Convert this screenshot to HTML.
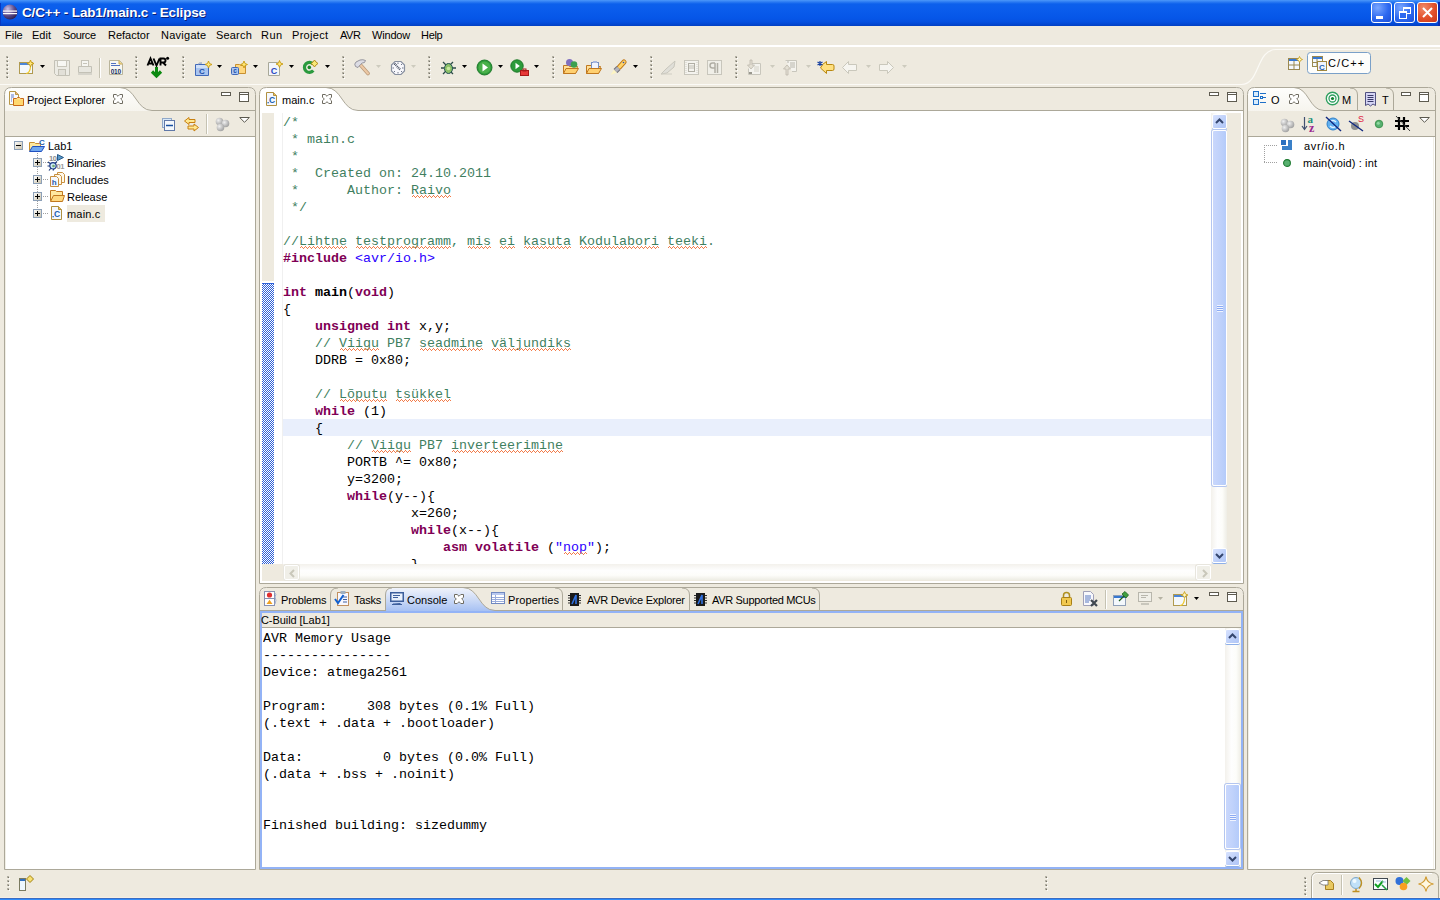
<!DOCTYPE html>
<html><head><meta charset="utf-8">
<style>
*{box-sizing:border-box;margin:0;padding:0}
html,body{width:1440px;height:900px;overflow:hidden;background:#eeeadf;font-family:"Liberation Sans",sans-serif;font-size:11px;color:#000}
.a{position:absolute}
.nw{white-space:nowrap}
#title{left:0;top:0;width:1440px;height:26px;background:linear-gradient(#4c98fa 0px,#2a7af2 2px,#0c60ec 4px,#0a5cec 10px,#0656e8 18px,#0550e0 22px,#0344cc 25px,#0340c0 26px)}
#title .t{left:22px;top:5px;color:#fff;font-weight:bold;font-size:13.5px;letter-spacing:-0.15px;text-shadow:1px 1px 0 #0a1f7a}
.wb{top:2px;width:21px;height:21px;border:1px solid #fff;border-radius:3px;background:radial-gradient(circle at 30% 25%,#7aa7ff,#2d69f0 55%,#1c4fd8)}
.menu span{position:absolute;top:30px}
.wl{left:0;top:45px;width:1440px;height:2px;background:#fff}
.code{font-family:"Liberation Mono",monospace;font-size:13.33px;line-height:17px;white-space:pre}
.cm{color:#3f7f5f}
.kw{color:#7f0055;font-weight:bold}
.bd{font-weight:bold}
.str{color:#2a00ff}
.sp{}
.grip{width:2px;border-left:2px dotted #9c9a8e}
</style></head><body>
<div id="title" class="a">
 <svg class="a" style="left:2px;top:4px" width="16" height="16" viewBox="0 0 16 16"><defs><radialGradient id="eg" cx="35%" cy="30%" r="75%"><stop offset="0" stop-color="#c9c0e8"/><stop offset=".6" stop-color="#5a4a8a"/><stop offset="1" stop-color="#2a2050"/></radialGradient></defs><circle cx="8" cy="8" r="7.5" fill="url(#eg)"/><rect x="1" y="6.5" width="14" height="1.2" fill="#fff"/><rect x="1" y="9" width="14" height="1.2" fill="#fff"/></svg>
 <div class="a t nw">C/C++ - Lab1/main.c - Eclipse</div>
 <div class="a" style="left:0;top:3px;width:1px;height:23px;background:#0838c0"></div><div class="a" style="left:1438px;top:2px;width:2px;height:24px;background:#0a2eb0"></div>
 <div class="a wb" style="left:1371px"><div class="a" style="left:4px;top:13px;width:7px;height:3px;background:#fff"></div></div>
 <div class="a wb" style="left:1394px"><div class="a" style="left:8px;top:4px;width:8px;height:7px;border:1px solid #fff;border-top-width:2px"></div><div class="a" style="left:4px;top:8px;width:8px;height:8px;border:1px solid #fff;border-top-width:2px;background:#2d69f0"></div></div>
 <div class="a wb" style="left:1417px;background:radial-gradient(circle at 30% 25%,#f08a68,#e2502a 55%,#c8381a)"><svg class="a" style="left:4px;top:4px" width="11" height="11"><path d="M1 1L10 10M10 1L1 10" stroke="#fff" stroke-width="2"/></svg></div>
</div>

<div class="a wl"></div>

<!-- FRAMES -->
<svg class="a" style="left:0;top:0" width="1440" height="900">
 <defs>
  <linearGradient id="tabg" x1="0" y1="0" x2="0" y2="1"><stop offset="0" stop-color="#fefefc"/><stop offset="1" stop-color="#eeeadf"/></linearGradient>
  <linearGradient id="tabb" x1="0" y1="0" x2="0" y2="1"><stop offset="0" stop-color="#f0f3fb"/><stop offset=".5" stop-color="#cddbf6"/><stop offset="1" stop-color="#a7c1f3"/></linearGradient>
 </defs>
 <!-- Project explorer -->
 <path d="M4.5 869.5 V94.5 Q4.5 87.5 11.5 87.5 H248.5 Q255.5 87.5 255.5 94.5 V869.5 H4.5Z" fill="#fff"/>
 <path d="M5 136 V95 Q5 88 12 88 H120 C136 88 136 110 152 110 H255 V136Z" fill="url(#tabg)"/>
 <path d="M152 111 H255 V136 H5 V111Z" fill="#eeeadf"/>
 <path d="M120 88 H248 Q255 88 255 95 V110 H152 C136 110 136 88 120 88Z" fill="#eeeadf"/>
 <path d="M120 87.5 C136 87.5 136 110.5 152 110.5 H255" fill="none" stroke="#aca899"/>
 <line x1="5" y1="136.5" x2="255" y2="136.5" stroke="#aca899"/>
 <path d="M5.5 137 V869" stroke="#f1efe6"/>
 <path d="M4.5 869.5 V94.5 Q4.5 87.5 11.5 87.5 H248.5 Q255.5 87.5 255.5 94.5 V869.5 H4.5Z" fill="none" stroke="#aca899"/>
 <!-- Editor -->
 <path d="M259.5 583.5 V94.5 Q259.5 87.5 266.5 87.5 H1236.5 Q1243.5 87.5 1243.5 94.5 V583.5 H259.5Z" fill="#fff"/>
 <path d="M326 88 H1236 Q1243 88 1243 95 V110 H358 C342 110 342 88 326 88Z" fill="#eeeadf"/>
 <path d="M326 87.5 C342 87.5 342 110.5 358 110.5 H1243" fill="none" stroke="#aca899"/>
 <path d="M259.5 583.5 V94.5 Q259.5 87.5 266.5 87.5 H1236.5 Q1243.5 87.5 1243.5 94.5 V583.5 H259.5Z" fill="none" stroke="#aca899"/>
 <!-- Outline -->
 <path d="M1247.5 869.5 V94.5 Q1247.5 87.5 1254.5 87.5 H1428.5 Q1435.5 87.5 1435.5 94.5 V869.5 H1247.5Z" fill="#fff"/>
 <path d="M1248 136 V95 Q1248 88 1255 88 H1294 C1309 88 1309 110 1324 110 H1435 V136Z" fill="url(#tabg)"/>
 <path d="M1324 111 H1435 V136 H1248 V111Z" fill="#eeeadf"/>
 <path d="M1294 88 H1428 Q1435 88 1435 95 V110 H1324 C1309 110 1309 88 1294 88Z" fill="#eeeadf"/>
 <path d="M1294 87.5 C1309 87.5 1309 110.5 1324 110.5 H1435" fill="none" stroke="#aca899"/>
 <path d="M1357.5 110 V95 Q1357.5 88 1350 88" fill="none" stroke="#aca899"/>
 <path d="M1393.5 110 V95 Q1393.5 88 1386 88" fill="none" stroke="#aca899"/>
 <line x1="1248" y1="136.5" x2="1435" y2="136.5" stroke="#aca899"/>
 <path d="M1248.5 137 V869 M1433.5 137 V869" stroke="#f1efe6"/>
 <path d="M1247.5 869.5 V94.5 Q1247.5 87.5 1254.5 87.5 H1428.5 Q1435.5 87.5 1435.5 94.5 V869.5 H1247.5Z" fill="none" stroke="#aca899"/>
 <!-- Console -->
 <path d="M259.5 869.5 V594.5 Q259.5 587.5 266.5 587.5 H1236.5 Q1243.5 587.5 1243.5 594.5 V869.5 H259.5Z" fill="#fff"/>
 <path d="M260 611 V595 Q260 588 267 588 H1236 Q1243 588 1243 595 V611Z" fill="#eeeadf"/>
 <path d="M385 611 V595 Q385 588 392 588 H463 C479 588 479 610 495 610 V611Z" fill="url(#tabb)"/>
 <path d="M463 587.5 C479 587.5 479 610.5 495 610.5" fill="none" stroke="#aca899"/>
 <path d="M330.5 610 V595 Q330.5 588 338 588" fill="none" stroke="#aca899"/>
 <path d="M385.5 611 V595 Q385.5 588 392 588" fill="none" stroke="#aca899"/>
 <path d="M562.5 610 V595 Q562.5 588 555 588" fill="none" stroke="#aca899"/>
 <path d="M689.5 610 V595 Q689.5 588 682 588" fill="none" stroke="#aca899"/>
 <path d="M819.5 610 V595 Q819.5 588 812 588" fill="none" stroke="#aca899"/>
 <line x1="260" y1="610.5" x2="385" y2="610.5" stroke="#aca899"/>
 <line x1="495" y1="610.5" x2="1243" y2="610.5" stroke="#aca899"/>
 <rect x="262" y="613" width="979" height="14" fill="#eeeadf"/>
 <line x1="262" y1="627.5" x2="1241" y2="627.5" stroke="#aca899"/>
 <path d="M259.5 869.5 V594.5 Q259.5 587.5 266.5 587.5 H1236.5 Q1243.5 587.5 1243.5 594.5 V869.5 H259.5Z" fill="none" stroke="#aca899"/>
 <path d="M261 612 H1242 V868 H261Z" fill="none" stroke="#93b3f6" stroke-width="2"/>
</svg>

<div class="a" style="left:67px;top:205px;width:38px;height:17px;background:#eeeadf"></div>
<!-- EDITOR -->
<div class="a" style="left:262px;top:113px;width:12px;height:168px;background:#eeeadf"></div>
<div class="a" style="left:262px;top:283px;width:12px;height:281px;background-color:#fff;background-image:repeating-conic-gradient(#2c5fd8 0% 25%,#fff 0% 50%);background-size:2px 2px;border-top:1px solid #2c5fd8"></div>
<div class="a" style="left:282px;top:113px;width:1px;height:451px;background:#f0f0f0"></div>
<div class="a" style="left:283px;top:419px;width:929px;height:17px;background:#e9effc"></div>
<div class="a" style="left:262px;top:564px;width:979px;height:17px;background:#eeeadf"></div>
<div class="a" style="left:1212px;top:113px;width:29px;height:451px;background:#eeeadf"></div>
<div class="a" style="left:262px;top:113px;width:950px;height:451px;overflow:hidden"><div class="a code" style="left:21px;top:1px"><span class="cm">/*
 * main.c
 *
 *  Created on: 24.10.2011
 *      Author: <span class="sp">Raivo</span>
 */</span>

<span class="cm">//<span class="sp">Lihtne</span> <span class="sp">testprogramm</span>, <span class="sp">mis</span> <span class="sp">ei</span> <span class="sp">kasuta</span> <span class="sp">Kodulabori</span> <span class="sp">teeki</span>.</span>
<span class="kw">#include</span> <span class="str">&lt;avr/io.h&gt;</span>

<span class="kw">int</span> <span class="bd">main</span>(<span class="kw">void</span>)
{
    <span class="kw">unsigned</span> <span class="kw">int</span> x,y;
    <span class="cm">// <span class="sp">Viigu</span> PB7 <span class="sp">seadmine</span> <span class="sp">väljundiks</span></span>
    DDRB = 0x80;

    <span class="cm">// <span class="sp">Lõputu</span> <span class="sp">tsükkel</span></span>
    <span class="kw">while</span> (1)
    {
        <span class="cm">// <span class="sp">Viigu</span> PB7 <span class="sp">inverteerimine</span></span>
        PORTB ^= 0x80;
        y=3200;
        <span class="kw">while</span>(y--){
                x=260;
                <span class="kw">while</span>(x--){
                    <span class="kw">asm</span> <span class="kw">volatile</span> (<span class="str">"<span class="sp">nop</span>"</span>);
                }
</div></div>

<!-- SQUIG --><svg class="a" style="left:0;top:0" width="1440" height="900"><path d="M411.5 197.5 L413.5 195.5 L415.5 197.5 L417.5 195.5 L419.5 197.5 L421.5 195.5 L423.5 197.5 L425.5 195.5 L427.5 197.5 L429.5 195.5 L431.5 197.5 L433.5 195.5 L435.5 197.5 L437.5 195.5 L439.5 197.5 L441.5 195.5 L443.5 197.5 L445.5 195.5 L447.5 197.5 L449.5 195.5 L451.5 197.5 M299.5 248.5 L301.5 246.5 L303.5 248.5 L305.5 246.5 L307.5 248.5 L309.5 246.5 L311.5 248.5 L313.5 246.5 L315.5 248.5 L317.5 246.5 L319.5 248.5 L321.5 246.5 L323.5 248.5 L325.5 246.5 L327.5 248.5 L329.5 246.5 L331.5 248.5 L333.5 246.5 L335.5 248.5 L337.5 246.5 L339.5 248.5 L341.5 246.5 L343.5 248.5 L345.5 246.5 L347.5 248.5 M355.5 248.5 L357.5 246.5 L359.5 248.5 L361.5 246.5 L363.5 248.5 L365.5 246.5 L367.5 248.5 L369.5 246.5 L371.5 248.5 L373.5 246.5 L375.5 248.5 L377.5 246.5 L379.5 248.5 L381.5 246.5 L383.5 248.5 L385.5 246.5 L387.5 248.5 L389.5 246.5 L391.5 248.5 L393.5 246.5 L395.5 248.5 L397.5 246.5 L399.5 248.5 L401.5 246.5 L403.5 248.5 L405.5 246.5 L407.5 248.5 L409.5 246.5 L411.5 248.5 L413.5 246.5 L415.5 248.5 L417.5 246.5 L419.5 248.5 L421.5 246.5 L423.5 248.5 L425.5 246.5 L427.5 248.5 L429.5 246.5 L431.5 248.5 L433.5 246.5 L435.5 248.5 L437.5 246.5 L439.5 248.5 L441.5 246.5 L443.5 248.5 L445.5 246.5 L447.5 248.5 L449.5 246.5 L451.5 248.5 M467.5 248.5 L469.5 246.5 L471.5 248.5 L473.5 246.5 L475.5 248.5 L477.5 246.5 L479.5 248.5 L481.5 246.5 L483.5 248.5 L485.5 246.5 L487.5 248.5 L489.5 246.5 L491.5 248.5 M499.5 248.5 L501.5 246.5 L503.5 248.5 L505.5 246.5 L507.5 248.5 L509.5 246.5 L511.5 248.5 L513.5 246.5 L515.5 248.5 M523.5 248.5 L525.5 246.5 L527.5 248.5 L529.5 246.5 L531.5 248.5 L533.5 246.5 L535.5 248.5 L537.5 246.5 L539.5 248.5 L541.5 246.5 L543.5 248.5 L545.5 246.5 L547.5 248.5 L549.5 246.5 L551.5 248.5 L553.5 246.5 L555.5 248.5 L557.5 246.5 L559.5 248.5 L561.5 246.5 L563.5 248.5 L565.5 246.5 L567.5 248.5 L569.5 246.5 L571.5 248.5 M579.5 248.5 L581.5 246.5 L583.5 248.5 L585.5 246.5 L587.5 248.5 L589.5 246.5 L591.5 248.5 L593.5 246.5 L595.5 248.5 L597.5 246.5 L599.5 248.5 L601.5 246.5 L603.5 248.5 L605.5 246.5 L607.5 248.5 L609.5 246.5 L611.5 248.5 L613.5 246.5 L615.5 248.5 L617.5 246.5 L619.5 248.5 L621.5 246.5 L623.5 248.5 L625.5 246.5 L627.5 248.5 L629.5 246.5 L631.5 248.5 L633.5 246.5 L635.5 248.5 L637.5 246.5 L639.5 248.5 L641.5 246.5 L643.5 248.5 L645.5 246.5 L647.5 248.5 L649.5 246.5 L651.5 248.5 L653.5 246.5 L655.5 248.5 L657.5 246.5 L659.5 248.5 M667.5 248.5 L669.5 246.5 L671.5 248.5 L673.5 246.5 L675.5 248.5 L677.5 246.5 L679.5 248.5 L681.5 246.5 L683.5 248.5 L685.5 246.5 L687.5 248.5 L689.5 246.5 L691.5 248.5 L693.5 246.5 L695.5 248.5 L697.5 246.5 L699.5 248.5 L701.5 246.5 L703.5 248.5 L705.5 246.5 L707.5 248.5 M339.5 350.5 L341.5 348.5 L343.5 350.5 L345.5 348.5 L347.5 350.5 L349.5 348.5 L351.5 350.5 L353.5 348.5 L355.5 350.5 L357.5 348.5 L359.5 350.5 L361.5 348.5 L363.5 350.5 L365.5 348.5 L367.5 350.5 L369.5 348.5 L371.5 350.5 L373.5 348.5 L375.5 350.5 L377.5 348.5 L379.5 350.5 M419.5 350.5 L421.5 348.5 L423.5 350.5 L425.5 348.5 L427.5 350.5 L429.5 348.5 L431.5 350.5 L433.5 348.5 L435.5 350.5 L437.5 348.5 L439.5 350.5 L441.5 348.5 L443.5 350.5 L445.5 348.5 L447.5 350.5 L449.5 348.5 L451.5 350.5 L453.5 348.5 L455.5 350.5 L457.5 348.5 L459.5 350.5 L461.5 348.5 L463.5 350.5 L465.5 348.5 L467.5 350.5 L469.5 348.5 L471.5 350.5 L473.5 348.5 L475.5 350.5 L477.5 348.5 L479.5 350.5 L481.5 348.5 L483.5 350.5 M491.5 350.5 L493.5 348.5 L495.5 350.5 L497.5 348.5 L499.5 350.5 L501.5 348.5 L503.5 350.5 L505.5 348.5 L507.5 350.5 L509.5 348.5 L511.5 350.5 L513.5 348.5 L515.5 350.5 L517.5 348.5 L519.5 350.5 L521.5 348.5 L523.5 350.5 L525.5 348.5 L527.5 350.5 L529.5 348.5 L531.5 350.5 L533.5 348.5 L535.5 350.5 L537.5 348.5 L539.5 350.5 L541.5 348.5 L543.5 350.5 L545.5 348.5 L547.5 350.5 L549.5 348.5 L551.5 350.5 L553.5 348.5 L555.5 350.5 L557.5 348.5 L559.5 350.5 L561.5 348.5 L563.5 350.5 L565.5 348.5 L567.5 350.5 L569.5 348.5 L571.5 350.5 M339.5 401.5 L341.5 399.5 L343.5 401.5 L345.5 399.5 L347.5 401.5 L349.5 399.5 L351.5 401.5 L353.5 399.5 L355.5 401.5 L357.5 399.5 L359.5 401.5 L361.5 399.5 L363.5 401.5 L365.5 399.5 L367.5 401.5 L369.5 399.5 L371.5 401.5 L373.5 399.5 L375.5 401.5 L377.5 399.5 L379.5 401.5 L381.5 399.5 L383.5 401.5 L385.5 399.5 L387.5 401.5 M395.5 401.5 L397.5 399.5 L399.5 401.5 L401.5 399.5 L403.5 401.5 L405.5 399.5 L407.5 401.5 L409.5 399.5 L411.5 401.5 L413.5 399.5 L415.5 401.5 L417.5 399.5 L419.5 401.5 L421.5 399.5 L423.5 401.5 L425.5 399.5 L427.5 401.5 L429.5 399.5 L431.5 401.5 L433.5 399.5 L435.5 401.5 L437.5 399.5 L439.5 401.5 L441.5 399.5 L443.5 401.5 L445.5 399.5 L447.5 401.5 L449.5 399.5 L451.5 401.5 M371.5 452.5 L373.5 450.5 L375.5 452.5 L377.5 450.5 L379.5 452.5 L381.5 450.5 L383.5 452.5 L385.5 450.5 L387.5 452.5 L389.5 450.5 L391.5 452.5 L393.5 450.5 L395.5 452.5 L397.5 450.5 L399.5 452.5 L401.5 450.5 L403.5 452.5 L405.5 450.5 L407.5 452.5 L409.5 450.5 L411.5 452.5 M451.5 452.5 L453.5 450.5 L455.5 452.5 L457.5 450.5 L459.5 452.5 L461.5 450.5 L463.5 452.5 L465.5 450.5 L467.5 452.5 L469.5 450.5 L471.5 452.5 L473.5 450.5 L475.5 452.5 L477.5 450.5 L479.5 452.5 L481.5 450.5 L483.5 452.5 L485.5 450.5 L487.5 452.5 L489.5 450.5 L491.5 452.5 L493.5 450.5 L495.5 452.5 L497.5 450.5 L499.5 452.5 L501.5 450.5 L503.5 452.5 L505.5 450.5 L507.5 452.5 L509.5 450.5 L511.5 452.5 L513.5 450.5 L515.5 452.5 L517.5 450.5 L519.5 452.5 L521.5 450.5 L523.5 452.5 L525.5 450.5 L527.5 452.5 L529.5 450.5 L531.5 452.5 L533.5 450.5 L535.5 452.5 L537.5 450.5 L539.5 452.5 L541.5 450.5 L543.5 452.5 L545.5 450.5 L547.5 452.5 L549.5 450.5 L551.5 452.5 L553.5 450.5 L555.5 452.5 L557.5 450.5 L559.5 452.5 L561.5 450.5 L563.5 452.5 M563.5 554.5 L565.5 552.5 L567.5 554.5 L569.5 552.5 L571.5 554.5 L573.5 552.5 L575.5 554.5 L577.5 552.5 L579.5 554.5 L581.5 552.5 L583.5 554.5 L585.5 552.5 L587.5 554.5" fill="none" stroke="#f27c4a" stroke-width="1" shape-rendering="crispEdges"/></svg><!-- /SQUIG -->
<!-- CONSOLE -->
<div class="a code" style="left:263px;top:630px;height:237px;overflow:hidden">AVR Memory Usage
----------------
Device: atmega2561

Program:     308 bytes (0.1% Full)
(.text + .data + .bootloader)

Data:          0 bytes (0.0% Full)
(.data + .bss + .noinit)


Finished building: sizedummy
</div>

<!-- SCROLLBARS -->
<style>
.sbtrack{background:linear-gradient(90deg,#f3f1ec,#fefefe 40%,#fdfdfa 70%,#eeede5)}
.sbbtn{border:1px solid #fff;border-radius:2px;background:linear-gradient(135deg,#d8e2fe,#bccff9 60%,#b1c6f6);box-shadow:0 1px 0 #8fb0e8}
.sbthumb{border:1px solid #fff;border-radius:2px;background:linear-gradient(90deg,#c9d7fc,#c0d2fb 50%,#b4cbfa);box-shadow:0 0 0 1px #b4c6f0}
.hbtrack{background:linear-gradient(#f3f1ec,#fefefe 40%,#fdfdfa 70%,#eeede5)}
.dis{border:1px solid #fff;border-radius:2px;background:#f0efe8;box-shadow:0 0 0 1px #e8e6de}
</style>
<div class="a sbtrack" style="left:1211px;top:113px;width:16px;height:451px"></div>
<div class="a sbbtn" style="left:1212px;top:114px;width:15px;height:15px"><svg class="a" style="left:2px;top:3px" width="9" height="6"><path d="M1 5L4.5 1.5L8 5" stroke="#34466e" stroke-width="2" fill="none"/></svg></div>
<div class="a sbthumb" style="left:1212px;top:130px;width:15px;height:356px"><div class="a" style="left:4px;top:174px;width:6px;height:7px;background:repeating-linear-gradient(#f0f4ff 0 1px,#8cabf3 1px 2px)"></div></div>
<div class="a sbbtn" style="left:1212px;top:548px;width:15px;height:15px"><svg class="a" style="left:2px;top:4px" width="9" height="6"><path d="M1 1L4.5 4.5L8 1" stroke="#34466e" stroke-width="2" fill="none"/></svg></div>
<div class="a" style="left:1227px;top:113px;width:14px;height:468px;background:#eeeadf"></div>
<div class="a hbtrack" style="left:283px;top:564px;width:928px;height:16px"></div>
<div class="a dis" style="left:284px;top:565px;width:15px;height:15px"><svg class="a" style="left:4px;top:3px" width="6" height="9"><path d="M5 1L1.5 4.5L5 8" stroke="#c9c7ba" stroke-width="2" fill="none"/></svg></div>
<div class="a dis" style="left:1196px;top:565px;width:15px;height:15px"><svg class="a" style="left:5px;top:3px" width="6" height="9"><path d="M1 1L4.5 4.5L1 8" stroke="#c9c7ba" stroke-width="2" fill="none"/></svg></div>
<div class="a" style="left:262px;top:564px;width:21px;height:17px;background:#eeeadf"></div>
<div class="a" style="left:1211px;top:564px;width:16px;height:17px;background:#eeeadf"></div>

<div class="a sbtrack" style="left:1225px;top:628px;width:16px;height:239px"></div>
<div class="a sbbtn" style="left:1225px;top:629px;width:15px;height:15px"><svg class="a" style="left:2px;top:3px" width="9" height="6"><path d="M1 5L4.5 1.5L8 5" stroke="#34466e" stroke-width="2" fill="none"/></svg></div>
<div class="a sbthumb" style="left:1225px;top:784px;width:15px;height:65px"><div class="a" style="left:4px;top:29px;width:6px;height:7px;background:repeating-linear-gradient(#f0f4ff 0 1px,#8cabf3 1px 2px)"></div></div>
<div class="a sbbtn" style="left:1225px;top:851px;width:15px;height:15px"><svg class="a" style="left:2px;top:4px" width="9" height="6"><path d="M1 1L4.5 4.5L8 1" stroke="#34466e" stroke-width="2" fill="none"/></svg></div>

<!-- STATUS BAR -->
<div class="a" style="left:0;top:897px;width:1440px;height:1px;background:#f6efe4"></div>
<div class="a" style="left:0;top:898px;width:1440px;height:1px;background:#3a6cc2"></div>
<div class="a" style="left:0;top:899px;width:1440px;height:1px;background:#2f8bfa"></div>
<!-- ICONS -->
<svg class="a" style="left:6px;top:56px" width="3" height="24" viewBox="0 0 3 24"><rect x="0" y="0" width="2" height="2" fill="#b4b1a4"/><rect x="1" y="1" width="1" height="1" fill="#77756b"/><rect x="2" y="2" width="1" height="1" fill="#fff"/><rect x="0" y="4" width="2" height="2" fill="#b4b1a4"/><rect x="1" y="5" width="1" height="1" fill="#77756b"/><rect x="2" y="6" width="1" height="1" fill="#fff"/><rect x="0" y="8" width="2" height="2" fill="#b4b1a4"/><rect x="1" y="9" width="1" height="1" fill="#77756b"/><rect x="2" y="10" width="1" height="1" fill="#fff"/><rect x="0" y="12" width="2" height="2" fill="#b4b1a4"/><rect x="1" y="13" width="1" height="1" fill="#77756b"/><rect x="2" y="14" width="1" height="1" fill="#fff"/><rect x="0" y="16" width="2" height="2" fill="#b4b1a4"/><rect x="1" y="17" width="1" height="1" fill="#77756b"/><rect x="2" y="18" width="1" height="1" fill="#fff"/><rect x="0" y="20" width="2" height="2" fill="#b4b1a4"/><rect x="1" y="21" width="1" height="1" fill="#77756b"/><rect x="2" y="22" width="1" height="1" fill="#fff"/></svg>
<svg class="a" style="left:135px;top:56px" width="3" height="24" viewBox="0 0 3 24"><rect x="0" y="0" width="2" height="2" fill="#b4b1a4"/><rect x="1" y="1" width="1" height="1" fill="#77756b"/><rect x="2" y="2" width="1" height="1" fill="#fff"/><rect x="0" y="4" width="2" height="2" fill="#b4b1a4"/><rect x="1" y="5" width="1" height="1" fill="#77756b"/><rect x="2" y="6" width="1" height="1" fill="#fff"/><rect x="0" y="8" width="2" height="2" fill="#b4b1a4"/><rect x="1" y="9" width="1" height="1" fill="#77756b"/><rect x="2" y="10" width="1" height="1" fill="#fff"/><rect x="0" y="12" width="2" height="2" fill="#b4b1a4"/><rect x="1" y="13" width="1" height="1" fill="#77756b"/><rect x="2" y="14" width="1" height="1" fill="#fff"/><rect x="0" y="16" width="2" height="2" fill="#b4b1a4"/><rect x="1" y="17" width="1" height="1" fill="#77756b"/><rect x="2" y="18" width="1" height="1" fill="#fff"/><rect x="0" y="20" width="2" height="2" fill="#b4b1a4"/><rect x="1" y="21" width="1" height="1" fill="#77756b"/><rect x="2" y="22" width="1" height="1" fill="#fff"/></svg>
<svg class="a" style="left:182px;top:56px" width="3" height="24" viewBox="0 0 3 24"><rect x="0" y="0" width="2" height="2" fill="#b4b1a4"/><rect x="1" y="1" width="1" height="1" fill="#77756b"/><rect x="2" y="2" width="1" height="1" fill="#fff"/><rect x="0" y="4" width="2" height="2" fill="#b4b1a4"/><rect x="1" y="5" width="1" height="1" fill="#77756b"/><rect x="2" y="6" width="1" height="1" fill="#fff"/><rect x="0" y="8" width="2" height="2" fill="#b4b1a4"/><rect x="1" y="9" width="1" height="1" fill="#77756b"/><rect x="2" y="10" width="1" height="1" fill="#fff"/><rect x="0" y="12" width="2" height="2" fill="#b4b1a4"/><rect x="1" y="13" width="1" height="1" fill="#77756b"/><rect x="2" y="14" width="1" height="1" fill="#fff"/><rect x="0" y="16" width="2" height="2" fill="#b4b1a4"/><rect x="1" y="17" width="1" height="1" fill="#77756b"/><rect x="2" y="18" width="1" height="1" fill="#fff"/><rect x="0" y="20" width="2" height="2" fill="#b4b1a4"/><rect x="1" y="21" width="1" height="1" fill="#77756b"/><rect x="2" y="22" width="1" height="1" fill="#fff"/></svg>
<svg class="a" style="left:342px;top:56px" width="3" height="24" viewBox="0 0 3 24"><rect x="0" y="0" width="2" height="2" fill="#b4b1a4"/><rect x="1" y="1" width="1" height="1" fill="#77756b"/><rect x="2" y="2" width="1" height="1" fill="#fff"/><rect x="0" y="4" width="2" height="2" fill="#b4b1a4"/><rect x="1" y="5" width="1" height="1" fill="#77756b"/><rect x="2" y="6" width="1" height="1" fill="#fff"/><rect x="0" y="8" width="2" height="2" fill="#b4b1a4"/><rect x="1" y="9" width="1" height="1" fill="#77756b"/><rect x="2" y="10" width="1" height="1" fill="#fff"/><rect x="0" y="12" width="2" height="2" fill="#b4b1a4"/><rect x="1" y="13" width="1" height="1" fill="#77756b"/><rect x="2" y="14" width="1" height="1" fill="#fff"/><rect x="0" y="16" width="2" height="2" fill="#b4b1a4"/><rect x="1" y="17" width="1" height="1" fill="#77756b"/><rect x="2" y="18" width="1" height="1" fill="#fff"/><rect x="0" y="20" width="2" height="2" fill="#b4b1a4"/><rect x="1" y="21" width="1" height="1" fill="#77756b"/><rect x="2" y="22" width="1" height="1" fill="#fff"/></svg>
<svg class="a" style="left:428px;top:56px" width="3" height="24" viewBox="0 0 3 24"><rect x="0" y="0" width="2" height="2" fill="#b4b1a4"/><rect x="1" y="1" width="1" height="1" fill="#77756b"/><rect x="2" y="2" width="1" height="1" fill="#fff"/><rect x="0" y="4" width="2" height="2" fill="#b4b1a4"/><rect x="1" y="5" width="1" height="1" fill="#77756b"/><rect x="2" y="6" width="1" height="1" fill="#fff"/><rect x="0" y="8" width="2" height="2" fill="#b4b1a4"/><rect x="1" y="9" width="1" height="1" fill="#77756b"/><rect x="2" y="10" width="1" height="1" fill="#fff"/><rect x="0" y="12" width="2" height="2" fill="#b4b1a4"/><rect x="1" y="13" width="1" height="1" fill="#77756b"/><rect x="2" y="14" width="1" height="1" fill="#fff"/><rect x="0" y="16" width="2" height="2" fill="#b4b1a4"/><rect x="1" y="17" width="1" height="1" fill="#77756b"/><rect x="2" y="18" width="1" height="1" fill="#fff"/><rect x="0" y="20" width="2" height="2" fill="#b4b1a4"/><rect x="1" y="21" width="1" height="1" fill="#77756b"/><rect x="2" y="22" width="1" height="1" fill="#fff"/></svg>
<svg class="a" style="left:552px;top:56px" width="3" height="24" viewBox="0 0 3 24"><rect x="0" y="0" width="2" height="2" fill="#b4b1a4"/><rect x="1" y="1" width="1" height="1" fill="#77756b"/><rect x="2" y="2" width="1" height="1" fill="#fff"/><rect x="0" y="4" width="2" height="2" fill="#b4b1a4"/><rect x="1" y="5" width="1" height="1" fill="#77756b"/><rect x="2" y="6" width="1" height="1" fill="#fff"/><rect x="0" y="8" width="2" height="2" fill="#b4b1a4"/><rect x="1" y="9" width="1" height="1" fill="#77756b"/><rect x="2" y="10" width="1" height="1" fill="#fff"/><rect x="0" y="12" width="2" height="2" fill="#b4b1a4"/><rect x="1" y="13" width="1" height="1" fill="#77756b"/><rect x="2" y="14" width="1" height="1" fill="#fff"/><rect x="0" y="16" width="2" height="2" fill="#b4b1a4"/><rect x="1" y="17" width="1" height="1" fill="#77756b"/><rect x="2" y="18" width="1" height="1" fill="#fff"/><rect x="0" y="20" width="2" height="2" fill="#b4b1a4"/><rect x="1" y="21" width="1" height="1" fill="#77756b"/><rect x="2" y="22" width="1" height="1" fill="#fff"/></svg>
<svg class="a" style="left:650px;top:56px" width="3" height="24" viewBox="0 0 3 24"><rect x="0" y="0" width="2" height="2" fill="#b4b1a4"/><rect x="1" y="1" width="1" height="1" fill="#77756b"/><rect x="2" y="2" width="1" height="1" fill="#fff"/><rect x="0" y="4" width="2" height="2" fill="#b4b1a4"/><rect x="1" y="5" width="1" height="1" fill="#77756b"/><rect x="2" y="6" width="1" height="1" fill="#fff"/><rect x="0" y="8" width="2" height="2" fill="#b4b1a4"/><rect x="1" y="9" width="1" height="1" fill="#77756b"/><rect x="2" y="10" width="1" height="1" fill="#fff"/><rect x="0" y="12" width="2" height="2" fill="#b4b1a4"/><rect x="1" y="13" width="1" height="1" fill="#77756b"/><rect x="2" y="14" width="1" height="1" fill="#fff"/><rect x="0" y="16" width="2" height="2" fill="#b4b1a4"/><rect x="1" y="17" width="1" height="1" fill="#77756b"/><rect x="2" y="18" width="1" height="1" fill="#fff"/><rect x="0" y="20" width="2" height="2" fill="#b4b1a4"/><rect x="1" y="21" width="1" height="1" fill="#77756b"/><rect x="2" y="22" width="1" height="1" fill="#fff"/></svg>
<svg class="a" style="left:735px;top:56px" width="3" height="24" viewBox="0 0 3 24"><rect x="0" y="0" width="2" height="2" fill="#b4b1a4"/><rect x="1" y="1" width="1" height="1" fill="#77756b"/><rect x="2" y="2" width="1" height="1" fill="#fff"/><rect x="0" y="4" width="2" height="2" fill="#b4b1a4"/><rect x="1" y="5" width="1" height="1" fill="#77756b"/><rect x="2" y="6" width="1" height="1" fill="#fff"/><rect x="0" y="8" width="2" height="2" fill="#b4b1a4"/><rect x="1" y="9" width="1" height="1" fill="#77756b"/><rect x="2" y="10" width="1" height="1" fill="#fff"/><rect x="0" y="12" width="2" height="2" fill="#b4b1a4"/><rect x="1" y="13" width="1" height="1" fill="#77756b"/><rect x="2" y="14" width="1" height="1" fill="#fff"/><rect x="0" y="16" width="2" height="2" fill="#b4b1a4"/><rect x="1" y="17" width="1" height="1" fill="#77756b"/><rect x="2" y="18" width="1" height="1" fill="#fff"/><rect x="0" y="20" width="2" height="2" fill="#b4b1a4"/><rect x="1" y="21" width="1" height="1" fill="#77756b"/><rect x="2" y="22" width="1" height="1" fill="#fff"/></svg>
<svg class="a" style="left:18px;top:59px" width="17" height="17" viewBox="0 0 17 17"><rect x="1.5" y="3.5" width="13" height="11" fill="#f4f8fc" stroke="#b09a50"/><rect x="2" y="4" width="12" height="2" fill="#4c86d8"/><path d="M8 14.5 Q12 14 12.5 8" stroke="#f0c828" fill="none" stroke-width="1.2"/><path d="M12.5 1.0 L13.5 3.5 L16.0 4.5 L13.5 5.5 L12.5 8.0 L11.5 5.5 L9.0 4.5 L11.5 3.5Z" fill="#ffe87a" stroke="#c89a10" stroke-width=".9" stroke-linejoin="round"/></svg>
<svg class="a" style="left:40px;top:65px" width="5" height="3" viewBox="0 0 5 3"><path d="M0 0H5L2.5 3Z" fill="#000"/></svg>
<svg class="a" style="left:54px;top:60px" width="16" height="16" viewBox="0 0 16 16"><path d="M0.5 0.5H15.5V15.5H2.5L0.5 13.5Z" fill="#ecebe4" stroke="#c3c1b6"/><rect x="3.5" y="0.5" width="9" height="6" fill="#f7f7f3" stroke="#c8c6bb"/><rect x="4.5" y="9.5" width="7" height="6" fill="#e2e0d8" stroke="#c3c1b6"/></svg>
<svg class="a" style="left:77px;top:60px" width="16" height="15" viewBox="0 0 16 15"><rect x="4.5" y="0.5" width="7" height="6" fill="#f6f6f2" stroke="#c6c4b9"/><path d="M1.5 6.5H14.5V12.5H1.5Z" fill="#e8e7e0" stroke="#c3c1b6"/><rect x="1" y="13" width="14" height="2" fill="#d6d4cb"/><rect x="6" y="3" width="4" height="1" fill="#c6c4b9"/></svg>
<svg class="a" style="left:99px;top:58px" width="2" height="20" viewBox="0 0 2 20"><rect x="0" y="0" width="1" height="20" fill="#c5c2b2"/><rect x="1" y="0" width="1" height="20" fill="#fff"/></svg>
<svg class="a" style="left:108px;top:60px" width="16" height="16" viewBox="0 0 16 16"><path d="M1.5 0.5H11.5L14.5 3.5V14.5H1.5Z" fill="#f7f7f2" stroke="#b9b49a"/><path d="M11 0.5V4H14.5" fill="#f0d890" stroke="#c8a850"/><rect x="3" y="3" width="5" height="1" fill="#5070c0"/><rect x="3" y="5" width="9" height="1" fill="#5070c0"/><text x="7.8" y="13.6" font-family="Liberation Sans" font-weight="bold" font-size="6.5" fill="#183060" text-anchor="middle" letter-spacing="-.2">010</text></svg>
<svg class="a" style="left:145px;top:56px" width="26" height="23" viewBox="0 0 26 23"><path d="M2.5 9.5L5.5 2.5L8.5 9.5M4 7.5H7M8.5 2.5L11.5 9.5L14.5 2.5M15.5 9.5V2.5H18.5Q20.5 2.5 20.5 4.5Q20.5 6.5 18.5 6.5H16M18 6.5L21 9.5" stroke="#000" stroke-width="1.9" fill="none"/><circle cx="22.6" cy="2.3" r="1.5" fill="#000"/><path d="M11.5 11V19" stroke="#0c8a10" stroke-width="3"/><path d="M7 15.5L11.5 20L16 15.5" stroke="#0c8a10" stroke-width="3.2" fill="none"/></svg>
<svg class="a" style="left:194px;top:60px" width="20" height="17" viewBox="0 0 20 17"><path d="M1.5 4.5H14.5V15.5H1.5Z" fill="#a8c4f0" stroke="#4068b8"/><path d="M2 5H14V8H2Z" fill="#d0e0f8"/><path d="M4 4.5 Q5 2.5 8 3" stroke="#7890c0" fill="none"/><text x="8" y="13.6" font-family="Liberation Sans" font-weight="bold" font-size="8" fill="#2050a8" text-anchor="middle">C</text><path d="M14.5 1.0 L15.5 3.5 L18.0 4.5 L15.5 5.5 L14.5 8.0 L13.5 5.5 L11.0 4.5 L13.5 3.5Z" fill="#ffe87a" stroke="#c89a10" stroke-width=".9" stroke-linejoin="round"/></svg>
<svg class="a" style="left:217px;top:65px" width="5" height="3" viewBox="0 0 5 3"><path d="M0 0H5L2.5 3Z" fill="#000"/></svg>
<svg class="a" style="left:230px;top:60px" width="19" height="17" viewBox="0 0 19 17"><path d="M5.5 4.5H9.5L10.5 5.5H15.5V13.5H5.5Z" fill="#ffd880" stroke="#c89030"/><rect x="1.5" y="7.5" width="7" height="7" rx="1" fill="#a8c4f0" stroke="#4068b8"/><text x="5" y="13" font-family="Liberation Sans" font-weight="bold" font-size="6.5" fill="#2050a8" text-anchor="middle">c</text><path d="M14 1.0 L15.0 3.5 L17.5 4.5 L15.0 5.5 L14 8.0 L13.0 5.5 L10.5 4.5 L13.0 3.5Z" fill="#ffe87a" stroke="#c89a10" stroke-width=".9" stroke-linejoin="round"/></svg>
<svg class="a" style="left:253px;top:65px" width="5" height="3" viewBox="0 0 5 3"><path d="M0 0H5L2.5 3Z" fill="#000"/></svg>
<svg class="a" style="left:267px;top:60px" width="18" height="17" viewBox="0 0 18 17"><path d="M1.5 2.5H10.5L12.5 4.5V15.5H1.5Z" fill="#f2f5fa" stroke="#a8a898"/><text x="7" y="13.5" font-family="Liberation Sans" font-weight="bold" font-size="9" fill="#2848c0" text-anchor="middle">C</text><path d="M12.5 0.5 L13.5 3.0 L16.0 4 L13.5 5.0 L12.5 7.5 L11.5 5.0 L9.0 4 L11.5 3.0Z" fill="#ffe87a" stroke="#c89a10" stroke-width=".9" stroke-linejoin="round"/></svg>
<svg class="a" style="left:289px;top:65px" width="5" height="3" viewBox="0 0 5 3"><path d="M0 0H5L2.5 3Z" fill="#000"/></svg>
<svg class="a" style="left:302px;top:59px" width="18" height="17" viewBox="0 0 18 17"><path d="M11.3 5.2A5 5 0 1 0 11.3 11.6" stroke="#2a9a3e" stroke-width="3.2" fill="none"/><circle cx="7.3" cy="8.4" r="1.8" fill="#1a8a2a"/><path d="M12.5 1L14 3L16 4.5L14 6L12.5 8L11 6L9 4.5L11 3Z" fill="#f8e878" stroke="#b08810" stroke-width=".9"/></svg>
<svg class="a" style="left:325px;top:65px" width="5" height="3" viewBox="0 0 5 3"><path d="M0 0H5L2.5 3Z" fill="#000"/></svg>
<svg class="a" style="left:353px;top:58px" width="17" height="18" viewBox="0 0 17 18"><path d="M7.5 7L15 15.5" stroke="#b89878" stroke-width="3.6" stroke-linecap="round"/><path d="M7.5 7L15 15.5" stroke="#ecc8a4" stroke-width="2.2" stroke-linecap="round"/><path d="M2.5 8.5Q0.8 6 3 4L7 2Q10 1.2 12.5 2.5L11.5 4.5Q9 4.5 7.5 6.5L5 9.5Z" fill="#dcdce4" stroke="#8c8c96" stroke-width=".9"/></svg>
<svg class="a" style="left:376px;top:65px" width="5" height="3" viewBox="0 0 5 3"><path d="M0 0H5L2.5 3Z" fill="#cdcbbe"/></svg>
<svg class="a" style="left:390px;top:60px" width="16" height="16" viewBox="0 0 16 16"><path d="M5 1.5H11L14.5 5V11L11 14.5H5L1.5 11V5Z" fill="#f8f8fc" stroke="#8890a0" stroke-width="1.2"/><path d="M8 2.5V4M8 12V13.5M2.5 8H4M12 8H13.5M4 4L5 5M12 12L11 11M12 4L11 5M4 12L5 11" stroke="#707888"/><path d="M4.5 3.5L10 9.5" stroke="#505868" stroke-width="2.2" stroke-dasharray="1 .8"/></svg>
<svg class="a" style="left:411px;top:65px" width="5" height="3" viewBox="0 0 5 3"><path d="M0 0H5L2.5 3Z" fill="#cdcbbe"/></svg>
<svg class="a" style="left:440px;top:59px" width="17" height="17" viewBox="0 0 17 17"><path d="M3 3L6 6M13 3L10 6M1 9H4M12 9H16M3 15L6 12M13 15L10 12" stroke="#2c4a48" stroke-width="1.3"/><ellipse cx="8.5" cy="9.5" rx="4" ry="5" fill="#8cc068" stroke="#1e5050" stroke-width="1"/><circle cx="8.5" cy="9.5" r="1.8" fill="#c8e8a0"/></svg>
<svg class="a" style="left:462px;top:65px" width="5" height="3" viewBox="0 0 5 3"><path d="M0 0H5L2.5 3Z" fill="#000"/></svg>
<svg class="a" style="left:476px;top:59px" width="17" height="17" viewBox="0 0 17 17"><circle cx="8.5" cy="8.5" r="7.5" fill="#2c9a3a" stroke="#1f7a2a"/><circle cx="8.5" cy="8.5" r="6" fill="#4ab04a"/><path d="M6.5 4.5L12 8.5L6.5 12.5Z" fill="#fff"/></svg>
<svg class="a" style="left:498px;top:65px" width="5" height="3" viewBox="0 0 5 3"><path d="M0 0H5L2.5 3Z" fill="#000"/></svg>
<svg class="a" style="left:510px;top:59px" width="19" height="17" viewBox="0 0 19 17"><circle cx="7" cy="7" r="6.2" fill="#2c9a3a" stroke="#1f7a2a"/><path d="M5.5 3.8L9.8 7L5.5 10.2Z" fill="#fff"/><rect x="10.5" y="11.5" width="8" height="5" fill="#e83838" stroke="#a81818"/><rect x="13" y="10" width="3" height="2" fill="none" stroke="#a81818"/></svg>
<svg class="a" style="left:534px;top:65px" width="5" height="3" viewBox="0 0 5 3"><path d="M0 0H5L2.5 3Z" fill="#000"/></svg>
<svg class="a" style="left:562px;top:58px" width="18" height="17" viewBox="0 0 18 17"><path d="M1.5 7.5H6.5L7.5 8.5H15.5L13.5 15.5H1.5Z" fill="#ffe098" stroke="#c07820"/><path d="M1.5 15.5L4 10.5H16.5L13.5 15.5Z" fill="#ffd070" stroke="#c07820"/><circle cx="7.5" cy="4.5" r="3.5" fill="#8070c0"/><circle cx="12" cy="6.5" r="3.3" fill="#3ca050"/></svg>
<svg class="a" style="left:585px;top:58px" width="17" height="17" viewBox="0 0 17 17"><path d="M1.5 7.5H6.5L7.5 8.5H15.5L13.5 15.5H1.5Z" fill="#ffe098" stroke="#c07820"/><rect x="6.5" y="4.5" width="7" height="6" fill="#f0f4fc" stroke="#7890c0"/><rect x="8" y="3" width="4" height="2" fill="#a8b8e0"/><path d="M1.5 15.5L4 10.5H16.5L13.5 15.5Z" fill="#ffd070" stroke="#c07820"/></svg>
<svg class="a" style="left:609px;top:58px" width="18" height="18" viewBox="0 0 18 18"><path d="M1.5 17L5 11.5L8 14.5Z" fill="#fff6c0" opacity=".9"/><path d="M10.5 9L15 4" stroke="#c07818" stroke-width="5" stroke-linecap="round"/><path d="M10.5 9L15 4" stroke="#ffd468" stroke-width="3.2" stroke-linecap="round"/><path d="M6.5 13L9.5 10" stroke="#6e6e78" stroke-width="5.4"/><path d="M6.5 13L9.5 10" stroke="#b4b4bc" stroke-width="3.6"/><circle cx="14.5" cy="4.5" r=".8" fill="#3050b0"/></svg>
<svg class="a" style="left:633px;top:65px" width="5" height="3" viewBox="0 0 5 3"><path d="M0 0H5L2.5 3Z" fill="#000"/></svg>
<svg class="a" style="left:660px;top:59px" width="17" height="17" viewBox="0 0 17 17"><path d="M1 15L6 10L15 2L14 8L7 14Z" fill="#e0dfd8" stroke="#c8c6bc"/><path d="M1 15H12" stroke="#d0cec4"/></svg>
<svg class="a" style="left:684px;top:60px" width="15" height="15" viewBox="0 0 15 15"><rect x="0.5" y="0.5" width="14" height="14" fill="#f4f3ee" stroke="#c8c6bc"/><rect x="4.5" y="3.5" width="6" height="8" fill="none" stroke="#b0aea4"/><path d="M5 6H10M5 8H10" stroke="#c0beb4"/><path d="M2 2V13M13 2V13" stroke="#d0cec4" stroke-dasharray="1 1"/></svg>
<svg class="a" style="left:707px;top:60px" width="15" height="15" viewBox="0 0 15 15"><rect x="0.5" y="0.5" width="14" height="14" fill="#f0efe8" stroke="#c8c6bc"/><path d="M10.5 3V13M8 3V13M8 3H5.5A2.5 2.5 0 0 0 5.5 8H8" stroke="#b0aea4" stroke-width="1.5" fill="none"/></svg>
<svg class="a" style="left:746px;top:59px" width="16" height="17" viewBox="0 0 16 17"><path d="M5.5 4.5H14.5V15.5H2.5V9.5" fill="#f4f3ee" stroke="#c8c6bc"/><path d="M8 8H13M8 10H13M8 12H13" stroke="#d4d2c8"/><path d="M4 1V6H1.5L5 10L8.5 6H6V1Z" fill="#e4e0d4" stroke="#bcb8ac" stroke-width=".8"/><rect x="3" y="13" width="3" height="2" fill="#9a988e"/></svg>
<svg class="a" style="left:770px;top:65px" width="5" height="3" viewBox="0 0 5 3"><path d="M0 0H5L2.5 3Z" fill="#cdcbbe"/></svg>
<svg class="a" style="left:782px;top:59px" width="16" height="17" viewBox="0 0 16 17"><path d="M3.5 1.5H14.5V12.5H10" fill="#f4f3ee" stroke="#c8c6bc"/><path d="M8 4H13M8 6H13M8 8H13M5 3H7" stroke="#b8b6ac"/><path d="M4 16V10H1.5L5 6L8.5 10H6V16Z" fill="#e4e0d4" stroke="#bcb8ac" stroke-width=".8"/></svg>
<svg class="a" style="left:806px;top:65px" width="5" height="3" viewBox="0 0 5 3"><path d="M0 0H5L2.5 3Z" fill="#cdcbbe"/></svg>
<svg class="a" style="left:817px;top:59px" width="18" height="17" viewBox="0 0 18 17"><path d="M5.5 5.5L9.5 2.5V5.5H15.5Q17 5.5 17 7V10Q17 11.5 15.5 11.5H9.5V14.5L3.5 9Z" fill="#ffe080" stroke="#b88810" stroke-width="1"/><path d="M3 2V7M0.5 3L5.5 6M0.5 6L5.5 3" stroke="#1840a0" stroke-width="1.2"/></svg>
<svg class="a" style="left:841px;top:59px" width="18" height="17" viewBox="0 0 18 17"><path d="M1.5 8.5L7.5 2.5V5.5H15.5V11.5H7.5V14.5Z" fill="#f6f5f0" stroke="#cac8bc" stroke-linejoin="round"/></svg>
<svg class="a" style="left:866px;top:65px" width="5" height="3" viewBox="0 0 5 3"><path d="M0 0H5L2.5 3Z" fill="#cdcbbe"/></svg>
<svg class="a" style="left:877px;top:59px" width="18" height="17" viewBox="0 0 18 17"><path d="M16.5 8.5L10.5 2.5V5.5H2.5V11.5H10.5V14.5Z" fill="#f6f5f0" stroke="#cac8bc" stroke-linejoin="round"/></svg>
<svg class="a" style="left:902px;top:65px" width="5" height="3" viewBox="0 0 5 3"><path d="M0 0H5L2.5 3Z" fill="#cdcbbe"/></svg>
<svg class="a" style="left:221px;top:92px" width="10" height="4" viewBox="0 0 10 4"><rect x="0.5" y="0.5" width="9" height="3" fill="#fff" stroke="#5e5b50"/></svg>
<svg class="a" style="left:239px;top:92px" width="10" height="10" viewBox="0 0 10 10"><rect x="0.5" y="0.5" width="9" height="9" fill="#fff" stroke="#5e5b50"/><rect x="1" y="2" width="8" height="1" fill="#5e5b50"/></svg>
<svg class="a" style="left:1209px;top:92px" width="10" height="4" viewBox="0 0 10 4"><rect x="0.5" y="0.5" width="9" height="3" fill="#fff" stroke="#5e5b50"/></svg>
<svg class="a" style="left:1227px;top:92px" width="10" height="10" viewBox="0 0 10 10"><rect x="0.5" y="0.5" width="9" height="9" fill="#fff" stroke="#5e5b50"/><rect x="1" y="2" width="8" height="1" fill="#5e5b50"/></svg>
<svg class="a" style="left:1401px;top:92px" width="10" height="4" viewBox="0 0 10 4"><rect x="0.5" y="0.5" width="9" height="3" fill="#fff" stroke="#5e5b50"/></svg>
<svg class="a" style="left:1419px;top:92px" width="10" height="10" viewBox="0 0 10 10"><rect x="0.5" y="0.5" width="9" height="9" fill="#fff" stroke="#5e5b50"/><rect x="1" y="2" width="8" height="1" fill="#5e5b50"/></svg>
<svg class="a" style="left:1209px;top:592px" width="10" height="4" viewBox="0 0 10 4"><rect x="0.5" y="0.5" width="9" height="3" fill="#fff" stroke="#5e5b50"/></svg>
<svg class="a" style="left:1227px;top:592px" width="10" height="10" viewBox="0 0 10 10"><rect x="0.5" y="0.5" width="9" height="9" fill="#fff" stroke="#5e5b50"/><rect x="1" y="2" width="8" height="1" fill="#5e5b50"/></svg>
<svg class="a" style="left:113px;top:94px" width="10" height="10" viewBox="0 0 10 10"><path d="M0.5 0.5H3.2L5 2.3L6.8 0.5H9.5V3.2L7.7 5L9.5 6.8V9.5H6.8L5 7.7L3.2 9.5H0.5V6.8L2.3 5L0.5 3.2Z" fill="#fff" stroke="#6e6b60"/></svg>
<svg class="a" style="left:322px;top:94px" width="10" height="10" viewBox="0 0 10 10"><path d="M0.5 0.5H3.2L5 2.3L6.8 0.5H9.5V3.2L7.7 5L9.5 6.8V9.5H6.8L5 7.7L3.2 9.5H0.5V6.8L2.3 5L0.5 3.2Z" fill="#fff" stroke="#6e6b60"/></svg>
<svg class="a" style="left:1289px;top:94px" width="10" height="10" viewBox="0 0 10 10"><path d="M0.5 0.5H3.2L5 2.3L6.8 0.5H9.5V3.2L7.7 5L9.5 6.8V9.5H6.8L5 7.7L3.2 9.5H0.5V6.8L2.3 5L0.5 3.2Z" fill="#fff" stroke="#6e6b60"/></svg>
<svg class="a" style="left:454px;top:594px" width="10" height="10" viewBox="0 0 10 10"><path d="M0.5 0.5H3.2L5 2.3L6.8 0.5H9.5V3.2L7.7 5L9.5 6.8V9.5H6.8L5 7.7L3.2 9.5H0.5V6.8L2.3 5L0.5 3.2Z" fill="#fff" stroke="#6e6b60"/></svg>
<svg class="a" style="left:8px;top:90px" width="17" height="17" viewBox="0 0 17 17"><path d="M1.5 1.5H7.5L10.5 4.5V14.5H1.5Z" fill="#f8faff" stroke="#b89848"/><path d="M7.5 1.5V4.5H10.5" fill="#f0b080" stroke="#b89848"/><path d="M3 5H6M3 7H6M3 9H4M3 11H4" stroke="#6078c8"/><path d="M5.5 8.5H8.5L9.5 7.5H11.5L12.5 8.5H15.5V15.5H5.5Z" fill="#ffe090" stroke="#c86818"/><path d="M6 9.5H15V15H6Z" fill="#ffd870"/></svg>
<svg class="a" style="left:265px;top:91px" width="13" height="16" viewBox="0 0 13 16"><path d="M1.5 1.5H8.5L11.5 4.5V14.5H1.5Z" fill="#f4f8ff" stroke="#b09040"/><path d="M8.5 1.5V4.5H11.5" fill="#e8c060" stroke="#b09040"/><text x="7" y="12.3" font-family="Liberation Sans" font-weight="bold" font-size="8.5" fill="#2060b0" text-anchor="middle">C</text><rect x="2.5" y="11" width="1.3" height="1.3" fill="#2060b0"/></svg>
<svg class="a" style="left:1252px;top:90px" width="15" height="16" viewBox="0 0 15 16"><rect x="1.5" y="1.5" width="5" height="5" fill="#d8ecfc" stroke="#1e70c8"/><rect x="1.5" y="9.5" width="5" height="5" fill="#d8ecfc" stroke="#1e70c8"/><path d="M8 3.5H14M11 7.5H14M8 12.5H14" stroke="#1e70c8"/><rect x="8.5" y="6.5" width="2" height="2" fill="none" stroke="#1e70c8"/></svg>
<svg class="a" style="left:1325px;top:91px" width="15" height="15" viewBox="0 0 15 15"><circle cx="7.5" cy="7.5" r="6.2" fill="#fff" stroke="#30a060" stroke-width="1.4"/><circle cx="7.5" cy="7.5" r="3.5" fill="#fff" stroke="#30a060" stroke-width="1.3"/><circle cx="7.5" cy="7.5" r="1.6" fill="#108030"/></svg>
<svg class="a" style="left:1364px;top:91px" width="13" height="16" viewBox="0 0 13 16"><path d="M1.5 1.5H11.5V14.5L9 13L6.5 15L4 13L1.5 14.5Z" fill="#d4d4f4" stroke="#505080"/><path d="M3.5 4.5H9.5M3.5 6.5H9.5M3.5 8.5H9.5M3.5 10.5H9.5" stroke="#383868"/></svg>
<svg class="a" style="left:161px;top:117px" width="16" height="15" viewBox="0 0 16 15"><rect x="1.5" y="1.5" width="9" height="9" fill="#d8e8f8" stroke="#90a8c8"/><rect x="3.5" y="3.5" width="10" height="10" fill="#f4f8fc" stroke="#6078a8"/><path d="M5 8.5H12" stroke="#1850a0" stroke-width="1.5"/></svg>
<svg class="a" style="left:183px;top:116px" width="17" height="17" viewBox="0 0 17 17"><path d="M1.5 5L6 1.5V3.5H12V6.5H6V8.5Z" fill="#ffe890" stroke="#c88010" stroke-linejoin="round"/><path d="M15.5 11.5L11 8V10H5V13H11V15Z" fill="#ffe890" stroke="#c88010" stroke-linejoin="round"/></svg>
<svg class="a" style="left:206px;top:114px" width="2" height="20" viewBox="0 0 2 20"><rect width="1" height="20" fill="#c5c2b2"/><rect x="1" width="1" height="20" fill="#fff"/></svg>
<svg class="a" style="left:215px;top:117px" width="15" height="15" viewBox="0 0 15 15"><defs><radialGradient id="gsp" cx="35%" cy="35%" r="65%"><stop offset="0" stop-color="#f0f0f0"/><stop offset="1" stop-color="#a4a4a4"/></radialGradient></defs><circle cx="4.5" cy="4.5" r="3.8" fill="url(#gsp)"/><circle cx="10.5" cy="6.5" r="3.8" fill="url(#gsp)"/><circle cx="5.5" cy="10.5" r="3.8" fill="url(#gsp)"/></svg>
<svg class="a" style="left:239px;top:117px" width="11" height="6" viewBox="0 0 11 6"><path d="M0.7 0.5H10.3L5.5 5.3Z" fill="#fff" stroke="#5a584e"/></svg>
<svg class="a" style="left:1280px;top:118px" width="15" height="15" viewBox="0 0 15 15"><defs><radialGradient id="gsp" cx="35%" cy="35%" r="65%"><stop offset="0" stop-color="#f0f0f0"/><stop offset="1" stop-color="#a4a4a4"/></radialGradient></defs><circle cx="4.5" cy="4.5" r="3.8" fill="url(#gsp)"/><circle cx="10.5" cy="6.5" r="3.8" fill="url(#gsp)"/><circle cx="5.5" cy="10.5" r="3.8" fill="url(#gsp)"/></svg>
<svg class="a" style="left:1301px;top:114px" width="18" height="18" viewBox="0 0 18 18"><path d="M3.5 3V15M1 12L3.5 15.5L6 12" stroke="#405070" fill="none" stroke-width="1.2"/><text x="6.5" y="8.5" font-family="Liberation Serif" font-weight="bold" font-size="11" fill="#20907a">a</text><text x="8" y="17.5" font-family="Liberation Serif" font-weight="bold" font-size="12" fill="#9a2890">z</text></svg>
<svg class="a" style="left:1325px;top:116px" width="17" height="16" viewBox="0 0 17 16"><circle cx="8" cy="8" r="6" fill="#60b0f0" stroke="#3080c8"/><path d="M5 6Q8 3 11 6M5 10Q8 13 11 10" stroke="#e0f0ff" fill="none" stroke-width="1.5"/><path d="M1 1L16 15" stroke="#102880" stroke-width="1.4"/></svg>
<svg class="a" style="left:1348px;top:114px" width="17" height="18" viewBox="0 0 17 18"><circle cx="7" cy="12" r="4" fill="#909090"/><path d="M1 7L15 17" stroke="#102880" stroke-width="1.4"/><text x="10" y="8" font-family="Liberation Sans" font-size="9" fill="#e02040">S</text></svg>
<svg class="a" style="left:1374px;top:119px" width="10" height="10" viewBox="0 0 10 10"><circle cx="5" cy="5" r="3.8" fill="#58b070" stroke="#2e8a40" stroke-width=".8"/><circle cx="4.3" cy="4.3" r="1.5" fill="#90d8a0"/></svg>
<svg class="a" style="left:1394px;top:115px" width="17" height="17" viewBox="0 0 17 17"><path d="M5 2V15M10 2V15M1 6H15M1 11H15" stroke="#000" stroke-width="2.2"/><path d="M2 1L16 16" stroke="#404040" stroke-width="1"/></svg>
<svg class="a" style="left:1419px;top:117px" width="11" height="6" viewBox="0 0 11 6"><path d="M0.7 0.5H10.3L5.5 5.3Z" fill="#fff" stroke="#5a584e"/></svg>
<svg class="a" style="left:1240px;top:47px;overflow:visible" width="200" height="40" viewBox="0 0 200 40"><path d="M-1240 37.5 H1.5 C20 37.5 16 2.5 36 2.5 H200" fill="none" stroke="#fbfaf6" stroke-width="1.2"/></svg>
<svg class="a" style="left:1287px;top:56px" width="17" height="15" viewBox="0 0 17 15"><rect x="1.5" y="2.5" width="11" height="11" fill="#f4f8fc" stroke="#9a8850"/><rect x="2" y="3" width="10" height="2" fill="#3878d0"/><path d="M7 5V13M2 9H12" stroke="#9a8850"/><path d="M12.5 0.5L13.5 2.5L15.5 3.5L13.5 4.5L12.5 6.5L11.5 4.5L9.5 3.5L11.5 2.5Z" fill="#fff8c0" stroke="#c89a10" stroke-width=".8"/></svg>
<svg class="a" style="left:1307px;top:52px" width="65" height="22" viewBox="0 0 65 22"><rect x="0.5" y="0.5" width="63" height="21" rx="3" fill="#fdfdfb" stroke="#7aa0c8"/></svg>
<svg class="a" style="left:1311px;top:55px" width="17" height="16" viewBox="0 0 17 16"><rect x="1.5" y="1.5" width="10" height="10" fill="#f4f8fc" stroke="#9a8850"/><rect x="2" y="2" width="9" height="2" fill="#3878d0"/><path d="M6 4V11M2 7.5H11" stroke="#9a8850"/><rect x="6.5" y="6.5" width="9" height="9" fill="#f0f4fc" stroke="#a08840"/><text x="11" y="14.5" font-family="Liberation Sans" font-weight="bold" font-size="8" fill="#2060b0" text-anchor="middle">C</text></svg>
<svg class="a" style="left:14px;top:141px" width="9" height="9" viewBox="0 0 9 9"><defs><linearGradient id="exg" x1="0" y1="0" x2="1" y2="1"><stop offset="0" stop-color="#fff"/><stop offset="1" stop-color="#c8c0a8"/></linearGradient></defs><rect x="0.5" y="0.5" width="8" height="8" fill="url(#exg)" stroke="#8ca0b8"/><path d="M2 4.5H7" stroke="#000"/></svg>
<svg class="a" style="left:37px;top:153px" width="1" height="58" viewBox="0 0 1 58"><rect x="0" y="0" width="1" height="1" fill="#a0a0a0"/><rect x="0" y="2" width="1" height="1" fill="#a0a0a0"/><rect x="0" y="4" width="1" height="1" fill="#a0a0a0"/><rect x="0" y="6" width="1" height="1" fill="#a0a0a0"/><rect x="0" y="8" width="1" height="1" fill="#a0a0a0"/><rect x="0" y="10" width="1" height="1" fill="#a0a0a0"/><rect x="0" y="12" width="1" height="1" fill="#a0a0a0"/><rect x="0" y="14" width="1" height="1" fill="#a0a0a0"/><rect x="0" y="16" width="1" height="1" fill="#a0a0a0"/><rect x="0" y="18" width="1" height="1" fill="#a0a0a0"/><rect x="0" y="20" width="1" height="1" fill="#a0a0a0"/><rect x="0" y="22" width="1" height="1" fill="#a0a0a0"/><rect x="0" y="24" width="1" height="1" fill="#a0a0a0"/><rect x="0" y="26" width="1" height="1" fill="#a0a0a0"/><rect x="0" y="28" width="1" height="1" fill="#a0a0a0"/><rect x="0" y="30" width="1" height="1" fill="#a0a0a0"/><rect x="0" y="32" width="1" height="1" fill="#a0a0a0"/><rect x="0" y="34" width="1" height="1" fill="#a0a0a0"/><rect x="0" y="36" width="1" height="1" fill="#a0a0a0"/><rect x="0" y="38" width="1" height="1" fill="#a0a0a0"/><rect x="0" y="40" width="1" height="1" fill="#a0a0a0"/><rect x="0" y="42" width="1" height="1" fill="#a0a0a0"/><rect x="0" y="44" width="1" height="1" fill="#a0a0a0"/><rect x="0" y="46" width="1" height="1" fill="#a0a0a0"/><rect x="0" y="48" width="1" height="1" fill="#a0a0a0"/><rect x="0" y="50" width="1" height="1" fill="#a0a0a0"/><rect x="0" y="52" width="1" height="1" fill="#a0a0a0"/><rect x="0" y="54" width="1" height="1" fill="#a0a0a0"/><rect x="0" y="56" width="1" height="1" fill="#a0a0a0"/></svg>
<svg class="a" style="left:33px;top:158px" width="9" height="9" viewBox="0 0 9 9"><defs><linearGradient id="exg" x1="0" y1="0" x2="1" y2="1"><stop offset="0" stop-color="#fff"/><stop offset="1" stop-color="#c8c0a8"/></linearGradient></defs><rect x="0.5" y="0.5" width="8" height="8" fill="url(#exg)" stroke="#8ca0b8"/><path d="M2 4.5H7" stroke="#000"/><path d="M4.5 2V7" stroke="#000"/></svg>
<svg class="a" style="left:43px;top:162px" width="6" height="1" viewBox="0 0 6 1"><rect x="0" y="0" width="1" height="1" fill="#a0a0a0"/><rect x="2" y="0" width="1" height="1" fill="#a0a0a0"/><rect x="4" y="0" width="1" height="1" fill="#a0a0a0"/></svg>
<svg class="a" style="left:33px;top:175px" width="9" height="9" viewBox="0 0 9 9"><defs><linearGradient id="exg" x1="0" y1="0" x2="1" y2="1"><stop offset="0" stop-color="#fff"/><stop offset="1" stop-color="#c8c0a8"/></linearGradient></defs><rect x="0.5" y="0.5" width="8" height="8" fill="url(#exg)" stroke="#8ca0b8"/><path d="M2 4.5H7" stroke="#000"/><path d="M4.5 2V7" stroke="#000"/></svg>
<svg class="a" style="left:43px;top:179px" width="6" height="1" viewBox="0 0 6 1"><rect x="0" y="0" width="1" height="1" fill="#a0a0a0"/><rect x="2" y="0" width="1" height="1" fill="#a0a0a0"/><rect x="4" y="0" width="1" height="1" fill="#a0a0a0"/></svg>
<svg class="a" style="left:33px;top:192px" width="9" height="9" viewBox="0 0 9 9"><defs><linearGradient id="exg" x1="0" y1="0" x2="1" y2="1"><stop offset="0" stop-color="#fff"/><stop offset="1" stop-color="#c8c0a8"/></linearGradient></defs><rect x="0.5" y="0.5" width="8" height="8" fill="url(#exg)" stroke="#8ca0b8"/><path d="M2 4.5H7" stroke="#000"/><path d="M4.5 2V7" stroke="#000"/></svg>
<svg class="a" style="left:43px;top:196px" width="6" height="1" viewBox="0 0 6 1"><rect x="0" y="0" width="1" height="1" fill="#a0a0a0"/><rect x="2" y="0" width="1" height="1" fill="#a0a0a0"/><rect x="4" y="0" width="1" height="1" fill="#a0a0a0"/></svg>
<svg class="a" style="left:33px;top:209px" width="9" height="9" viewBox="0 0 9 9"><defs><linearGradient id="exg" x1="0" y1="0" x2="1" y2="1"><stop offset="0" stop-color="#fff"/><stop offset="1" stop-color="#c8c0a8"/></linearGradient></defs><rect x="0.5" y="0.5" width="8" height="8" fill="url(#exg)" stroke="#8ca0b8"/><path d="M2 4.5H7" stroke="#000"/><path d="M4.5 2V7" stroke="#000"/></svg>
<svg class="a" style="left:43px;top:213px" width="6" height="1" viewBox="0 0 6 1"><rect x="0" y="0" width="1" height="1" fill="#a0a0a0"/><rect x="2" y="0" width="1" height="1" fill="#a0a0a0"/><rect x="4" y="0" width="1" height="1" fill="#a0a0a0"/></svg>
<svg class="a" style="left:28px;top:138px" width="18" height="15" viewBox="0 0 18 15"><path d="M1.5 4.5H6.5L7.5 5.5H12.5V12.5H1.5Z" fill="#ffe8a0" stroke="#c89030"/><path d="M1.5 13.5L4.5 8.5H16.5L13.5 13.5Z" fill="#70a8f0" stroke="#2050c0"/><text x="14" y="6.5" font-family="Liberation Sans" font-weight="bold" font-size="8" fill="#2060b0" text-anchor="middle">C</text></svg>
<svg class="a" style="left:46px;top:152px" width="20" height="20" viewBox="0 0 20 20"><text x="3" y="8.6" font-family="Liberation Sans" font-weight="bold" font-size="7.5" fill="#8a8a8a" letter-spacing="-.5">10</text><text x="10.5" y="17" font-family="Liberation Sans" font-weight="bold" font-size="7.5" fill="#9a9a9a" letter-spacing="-.5">01</text><path d="M11.5 2.5V8.5L17.5 5.5Z" fill="#5a9ac8" stroke="#2a5a88" stroke-width="1"/><path d="M2 10L5 12M1.5 14H4M3 18.5L5 16M11 9.5L9 11.5M7 18.5L8 16.5" stroke="#1e3a78" stroke-width="1.2"/><circle cx="7" cy="13.8" r="3.2" fill="#d0ecf4" stroke="#1e3a88" stroke-width="1.2"/><circle cx="7.5" cy="14" r="1.3" fill="#70a870"/></svg>
<svg class="a" style="left:49px;top:171px" width="16" height="17" viewBox="0 0 16 17"><path d="M8.5 1.5H13.5L15.5 3.5V11.5H8.5Z" fill="#fff8e8" stroke="#c89040"/><path d="M5.5 3.5H10.5L12.5 5.5V13.5H5.5Z" fill="#fff8e8" stroke="#c89040"/><path d="M1.5 5.5H7.5L9.5 7.5V15.5H1.5Z" fill="#f4f8ff" stroke="#c89040"/><text x="5.3" y="14" font-family="Liberation Sans" font-weight="bold" font-size="8" fill="#2858a8" text-anchor="middle">h</text></svg>
<svg class="a" style="left:49px;top:188px" width="16" height="15" viewBox="0 0 16 15"><path d="M1.5 2.5H6.5L7.5 3.5H13.5V12.5H1.5Z" fill="#ffe8a0" stroke="#c07820"/><path d="M1.5 13.5L4.5 7.5H15.5L13.5 13.5Z" fill="#ffd880" stroke="#c07820"/></svg>
<svg class="a" style="left:50px;top:205px" width="13" height="16" viewBox="0 0 13 16"><path d="M1.5 1.5H8.5L11.5 4.5V14.5H1.5Z" fill="#f4f8ff" stroke="#b09040"/><path d="M8.5 1.5V4.5H11.5" fill="#e8c060" stroke="#b09040"/><text x="7" y="12.3" font-family="Liberation Sans" font-weight="bold" font-size="8.5" fill="#2060b0" text-anchor="middle">C</text><rect x="2.5" y="11" width="1.3" height="1.3" fill="#2060b0"/></svg>
<svg class="a" style="left:1264px;top:145px" width="1" height="18" viewBox="0 0 1 18"><rect x="0" y="0" width="1" height="1" fill="#a0a0a0"/><rect x="0" y="2" width="1" height="1" fill="#a0a0a0"/><rect x="0" y="4" width="1" height="1" fill="#a0a0a0"/><rect x="0" y="6" width="1" height="1" fill="#a0a0a0"/><rect x="0" y="8" width="1" height="1" fill="#a0a0a0"/><rect x="0" y="10" width="1" height="1" fill="#a0a0a0"/><rect x="0" y="12" width="1" height="1" fill="#a0a0a0"/><rect x="0" y="14" width="1" height="1" fill="#a0a0a0"/><rect x="0" y="16" width="1" height="1" fill="#a0a0a0"/></svg>
<svg class="a" style="left:1264px;top:145px" width="14" height="1" viewBox="0 0 14 1"><rect x="0" y="0" width="1" height="1" fill="#a0a0a0"/><rect x="2" y="0" width="1" height="1" fill="#a0a0a0"/><rect x="4" y="0" width="1" height="1" fill="#a0a0a0"/><rect x="6" y="0" width="1" height="1" fill="#a0a0a0"/><rect x="8" y="0" width="1" height="1" fill="#a0a0a0"/><rect x="10" y="0" width="1" height="1" fill="#a0a0a0"/><rect x="12" y="0" width="1" height="1" fill="#a0a0a0"/></svg>
<svg class="a" style="left:1264px;top:162px" width="14" height="1" viewBox="0 0 14 1"><rect x="0" y="0" width="1" height="1" fill="#a0a0a0"/><rect x="2" y="0" width="1" height="1" fill="#a0a0a0"/><rect x="4" y="0" width="1" height="1" fill="#a0a0a0"/><rect x="6" y="0" width="1" height="1" fill="#a0a0a0"/><rect x="8" y="0" width="1" height="1" fill="#a0a0a0"/><rect x="10" y="0" width="1" height="1" fill="#a0a0a0"/><rect x="12" y="0" width="1" height="1" fill="#a0a0a0"/></svg>
<svg class="a" style="left:1281px;top:140px" width="11" height="10" viewBox="0 0 11 10"><rect x="0" y="0" width="5" height="5" fill="#2a70c0"/><rect x="7" y="0" width="4" height="10" fill="#3a80c8"/><rect x="1" y="6" width="10" height="4" fill="#3a80c8"/></svg>
<svg class="a" style="left:1283px;top:159px" width="8" height="8" viewBox="0 0 8 8"><circle cx="4" cy="4" r="3.4" fill="#58b070" stroke="#1e7a30" stroke-width="1.1"/></svg>
<svg class="a" style="left:263px;top:590px" width="16" height="17" viewBox="0 0 16 17"><rect x="1.5" y="1.5" width="10" height="14" fill="#fff" stroke="#8890b0"/><path d="M1.5 8.5H11.5" stroke="#8890b0"/><circle cx="6.5" cy="5" r="2.6" fill="#e03030"/><path d="M6.5 9.8L9.5 14H3.5Z" fill="#f0a020"/><path d="M11.5 2.5Q14 4 12 7Q14 10 12 14" stroke="#a0b0d0" fill="none"/></svg>
<svg class="a" style="left:334px;top:590px" width="17" height="17" viewBox="0 0 17 17"><rect x="3.5" y="2.5" width="11" height="13" fill="#f8f8ff" stroke="#c09060"/><rect x="6.5" y="1" width="5" height="3" fill="#a0b0c0"/><path d="M9 7H13M9 9.5H13M9 12H13" stroke="#4060a0"/><path d="M1 9L4 13L9.5 5" stroke="#1060d0" stroke-width="2" fill="none"/></svg>
<svg class="a" style="left:389px;top:591px" width="16" height="15" viewBox="0 0 16 15"><rect x="1" y="1" width="14" height="10" fill="#3c5e9c"/><rect x="2.5" y="2.5" width="11" height="7" fill="#e8f0fc"/><path d="M4 4.5H11M4 6.5H9" stroke="#3c5e9c"/><path d="M5 12H11V13H3V14H13V13H11" fill="#3c5e9c"/><rect x="4" y="12.5" width="8" height="1.5" fill="#3c5e9c"/></svg>
<svg class="a" style="left:491px;top:592px" width="15" height="13" viewBox="0 0 15 13"><rect x="0.5" y="0.5" width="13" height="11" fill="#fff" stroke="#7088c0"/><rect x="1" y="1" width="12" height="2" fill="#b8c8f0"/><path d="M1 5.5H13M1 7.5H13M1 9.5H13M4.5 3V11" stroke="#9aacdc"/></svg>
<svg class="a" style="left:567px;top:593px" width="15" height="13" viewBox="0 0 15 13"><path d="M1 2.5H3M1 5H3M1 7.5H3M1 10H3M12 2.5H14M12 5H14M12 7.5H14M12 10H14" stroke="#303030"/><rect x="3" y="0" width="9" height="13" fill="#1a1a1a"/><path d="M5 11L9 2V11" stroke="#3070e0" stroke-width="1.6" fill="none"/></svg>
<svg class="a" style="left:693px;top:593px" width="15" height="13" viewBox="0 0 15 13"><path d="M1 2.5H3M1 5H3M1 7.5H3M1 10H3M12 2.5H14M12 5H14M12 7.5H14M12 10H14" stroke="#303030"/><rect x="3" y="0" width="9" height="13" fill="#1a1a1a"/><path d="M5 11L9 2V11" stroke="#3070e0" stroke-width="1.6" fill="none"/></svg>
<svg class="a" style="left:1060px;top:591px" width="13" height="15" viewBox="0 0 13 15"><path d="M3.5 6.5V4.5A3 3 0 0 1 9.5 4.5V6.5" stroke="#b09020" stroke-width="1.5" fill="none"/><rect x="1.5" y="6.5" width="10" height="8" rx="1" fill="#f0c850" stroke="#a88018"/><rect x="6" y="9" width="1" height="3" fill="#806010"/></svg>
<svg class="a" style="left:1082px;top:591px" width="16" height="16" viewBox="0 0 16 16"><path d="M1.5 0.5H8.5L11.5 3.5V14.5H1.5Z" fill="#f8f8fc" stroke="#a0a0b8"/><path d="M3 5H9M3 7H9M3 9H8M3 11H7" stroke="#5878c0"/><path d="M9 9L15 15M15 9L9 15" stroke="#404850" stroke-width="2.2"/></svg>
<svg class="a" style="left:1105px;top:590px" width="2" height="19" viewBox="0 0 2 19"><rect width="1" height="19" fill="#c5c2b2"/><rect x="1" width="1" height="19" fill="#fff"/></svg>
<svg class="a" style="left:1113px;top:591px" width="16" height="16" viewBox="0 0 16 16"><rect x="0.5" y="4.5" width="12" height="10" fill="#f4f8fc" stroke="#90a0b8"/><rect x="1" y="5" width="11" height="2" fill="#3878d0"/><path d="M6 10L11 5" stroke="#206020" stroke-width="1.2"/><path d="M9 3L12 0.5L15.5 4L13 7Z" fill="#40a040" stroke="#206020" stroke-width=".8"/></svg>
<svg class="a" style="left:1138px;top:592px" width="14" height="13" viewBox="0 0 14 13"><rect x="0.5" y="0.5" width="13" height="9" fill="#f0efe8" stroke="#b8b6ac"/><path d="M3 3.5H10M3 5.5H8" stroke="#b8b6ac"/><rect x="3" y="11" width="8" height="2" fill="#c8c6bc"/></svg>
<svg class="a" style="left:1158px;top:597px" width="5" height="3" viewBox="0 0 5 3"><path d="M0 0H5L2.5 3Z" fill="#b5b2a3"/></svg>
<svg class="a" style="left:1172px;top:591px" width="17" height="16" viewBox="0 0 17 16"><rect x="1.5" y="3.5" width="13" height="11" fill="#f4f8fc" stroke="#b09a50"/><rect x="2" y="4" width="12" height="2" fill="#4c86d8"/><path d="M8 14.5 Q12 14 12.5 8" stroke="#f0c828" fill="none" stroke-width="1.2"/><path d="M12.5 0.5L13.5 3L16 4L13.5 5L12.5 7.5L11.5 5L9 4L11.5 3Z" fill="#fff8c0" stroke="#c89a10" stroke-width=".8"/></svg>
<svg class="a" style="left:1194px;top:597px" width="5" height="3" viewBox="0 0 5 3"><path d="M0 0H5L2.5 3Z" fill="#000"/></svg>
<svg class="a" style="left:7px;top:876px" width="3" height="16" viewBox="0 0 3 16"><rect x="0" y="0" width="2" height="2" fill="#b4b1a4"/><rect x="1" y="1" width="1" height="1" fill="#77756b"/><rect x="2" y="2" width="1" height="1" fill="#fff"/><rect x="0" y="4" width="2" height="2" fill="#b4b1a4"/><rect x="1" y="5" width="1" height="1" fill="#77756b"/><rect x="2" y="6" width="1" height="1" fill="#fff"/><rect x="0" y="8" width="2" height="2" fill="#b4b1a4"/><rect x="1" y="9" width="1" height="1" fill="#77756b"/><rect x="2" y="10" width="1" height="1" fill="#fff"/><rect x="0" y="12" width="2" height="2" fill="#b4b1a4"/><rect x="1" y="13" width="1" height="1" fill="#77756b"/><rect x="2" y="14" width="1" height="1" fill="#fff"/></svg>
<svg class="a" style="left:18px;top:875px" width="17" height="16" viewBox="0 0 17 16"><rect x="1.5" y="3.5" width="6" height="12" fill="#eef8ff" stroke="#7a7a60"/><rect x="2" y="4" width="5" height="2" fill="#3070c0"/><path d="M12 0.5L15.5 4L12 7.5L8.5 4Z" fill="#f8e070" stroke="#a08010"/></svg>
<svg class="a" style="left:1045px;top:876px" width="3" height="16" viewBox="0 0 3 16"><rect x="0" y="0" width="2" height="2" fill="#b4b1a4"/><rect x="1" y="1" width="1" height="1" fill="#77756b"/><rect x="2" y="2" width="1" height="1" fill="#fff"/><rect x="0" y="4" width="2" height="2" fill="#b4b1a4"/><rect x="1" y="5" width="1" height="1" fill="#77756b"/><rect x="2" y="6" width="1" height="1" fill="#fff"/><rect x="0" y="8" width="2" height="2" fill="#b4b1a4"/><rect x="1" y="9" width="1" height="1" fill="#77756b"/><rect x="2" y="10" width="1" height="1" fill="#fff"/><rect x="0" y="12" width="2" height="2" fill="#b4b1a4"/><rect x="1" y="13" width="1" height="1" fill="#77756b"/><rect x="2" y="14" width="1" height="1" fill="#fff"/></svg>
<svg class="a" style="left:1304px;top:877px" width="3" height="20" viewBox="0 0 3 20"><rect x="0" y="0" width="2" height="2" fill="#b4b1a4"/><rect x="1" y="1" width="1" height="1" fill="#77756b"/><rect x="2" y="2" width="1" height="1" fill="#fff"/><rect x="0" y="4" width="2" height="2" fill="#b4b1a4"/><rect x="1" y="5" width="1" height="1" fill="#77756b"/><rect x="2" y="6" width="1" height="1" fill="#fff"/><rect x="0" y="8" width="2" height="2" fill="#b4b1a4"/><rect x="1" y="9" width="1" height="1" fill="#77756b"/><rect x="2" y="10" width="1" height="1" fill="#fff"/><rect x="0" y="12" width="2" height="2" fill="#b4b1a4"/><rect x="1" y="13" width="1" height="1" fill="#77756b"/><rect x="2" y="14" width="1" height="1" fill="#fff"/><rect x="0" y="16" width="2" height="2" fill="#b4b1a4"/><rect x="1" y="17" width="1" height="1" fill="#77756b"/><rect x="2" y="18" width="1" height="1" fill="#fff"/></svg>
<svg class="a" style="left:1311px;top:871px" width="129" height="27" viewBox="0 0 129 27"><path d="M0.5 27V7.5Q0.5 1.5 6.5 1.5H121Q127.5 1.5 127.5 7.5V27" fill="none" stroke="#aca899"/><path d="M1.5 27V7.5Q1.5 2.5 6.5 2.5H121" fill="none" stroke="#fff"/></svg>
<svg class="a" style="left:1318px;top:877px" width="17" height="14" viewBox="0 0 17 14"><path d="M7.5 3.5H12.5L15.5 6.5V12.5H7.5Z" fill="#e8c860" stroke="#a88020"/><path d="M1 6L5 3.5H10V8H5Z" fill="#fff" stroke="#707070" stroke-width=".8"/></svg>
<svg class="a" style="left:1341px;top:875px" width="2" height="20" viewBox="0 0 2 20"><rect width="1" height="20" fill="#c5c2b2"/><rect x="1" width="1" height="20" fill="#fff"/></svg>
<svg class="a" style="left:1350px;top:876px" width="14" height="17" viewBox="0 0 14 17"><circle cx="6" cy="7" r="5.5" fill="#c0e0f8" stroke="#80a8c8"/><circle cx="4.5" cy="5" r="2" fill="#f0faff"/><path d="M9 1.5Q14 7 9 12.5" stroke="#c09020" stroke-width="1.4" fill="none"/><path d="M6 13V15M2.5 15.5H9.5" stroke="#c09020" stroke-width="1.5"/></svg>
<svg class="a" style="left:1373px;top:878px" width="16" height="13" viewBox="0 0 16 13"><rect x="0.5" y="0.5" width="14" height="11" fill="#f8fcff" stroke="#404850"/><path d="M2 6L5 9L10 3" stroke="#10a020" stroke-width="2" fill="none"/><path d="M9 7L14 12" stroke="#20a040" stroke-width="1.6"/><path d="M3 3H8M9 4H13" stroke="#a0c0e0"/></svg>
<svg class="a" style="left:1395px;top:876px" width="17" height="15" viewBox="0 0 17 15"><circle cx="4.5" cy="5" r="4" fill="#3070d8"/><path d="M11.5 1L15.5 5L11.5 9L7.5 5Z" fill="#70c040"/><circle cx="8.5" cy="10.5" r="3.8" fill="#f8a020"/></svg>
<svg class="a" style="left:1418px;top:876px" width="16" height="16" viewBox="0 0 16 16"><path d="M8 0.5Q9 7 15.5 8Q9 9 8 15.5Q7 9 0.5 8Q7 7 8 0.5Z" fill="#fff8e0" stroke="#d09a30" stroke-width="1.2"/></svg>
<!-- /ICONS -->
<!-- LABELS -->
<div id="L0" class="a nw" style="left:5.00px;top:29px;letter-spacing:0.000px;">File</div>
<div id="L1" class="a nw" style="left:32.00px;top:29px;letter-spacing:0.000px;">Edit</div>
<div id="L2" class="a nw" style="left:63.00px;top:29px;letter-spacing:-0.360px;">Source</div>
<div id="L3" class="a nw" style="left:108.00px;top:29px;letter-spacing:0.000px;">Refactor</div>
<div id="L4" class="a nw" style="left:161.00px;top:29px;letter-spacing:0.257px;">Navigate</div>
<div id="L5" class="a nw" style="left:216.00px;top:29px;letter-spacing:0.180px;">Search</div>
<div id="L6" class="a nw" style="left:261.00px;top:29px;letter-spacing:0.450px;">Run</div>
<div id="L7" class="a nw" style="left:292.00px;top:29px;letter-spacing:0.300px;">Project</div>
<div id="L8" class="a nw" style="left:340.00px;top:29px;letter-spacing:-0.450px;">AVR</div>
<div id="L9" class="a nw" style="left:372.00px;top:29px;letter-spacing:-0.180px;">Window</div>
<div id="L10" class="a nw" style="left:421.00px;top:29px;letter-spacing:-0.300px;">Help</div>
<div id="L11" class="a nw" style="left:27.00px;top:94px;letter-spacing:0.000px;">Project Explorer</div>
<div id="L12" class="a nw" style="left:282.00px;top:94px;letter-spacing:0.000px;">main.c</div>
<div id="L13" class="a nw" style="left:1271.00px;top:94px;letter-spacing:0.000px;">O</div>
<div id="L14" class="a nw" style="left:1342.00px;top:94px;letter-spacing:9.000px;">M</div>
<div id="L15" class="a nw" style="left:1382.00px;top:94px;letter-spacing:-3.600px;">T</div>
<div id="L16" class="a nw" style="left:281.00px;top:594px;letter-spacing:-0.129px;">Problems</div>
<div id="L17" class="a nw" style="left:354.00px;top:594px;letter-spacing:-0.225px;">Tasks</div>
<div id="L18" class="a nw" style="left:407.00px;top:594px;letter-spacing:0.000px;">Console</div>
<div id="L19" class="a nw" style="left:508.00px;top:594px;letter-spacing:0.100px;">Properties</div>
<div id="L20" class="a nw" style="left:587.00px;top:594px;letter-spacing:-0.250px;">AVR Device Explorer</div>
<div id="L21" class="a nw" style="left:712.00px;top:594px;letter-spacing:-0.318px;">AVR Supported MCUs</div>
<div id="L22" class="a nw" style="left:261.00px;top:614px;letter-spacing:-0.069px;">C-Build [Lab1]</div>
<div id="L23" class="a nw" style="left:1328.00px;top:57px;letter-spacing:1.125px;">C/C++</div>
<div id="L24" class="a nw" style="left:48.00px;top:140px;letter-spacing:0.000px;">Lab1</div>
<div id="L25" class="a nw" style="left:67.00px;top:157px;letter-spacing:-0.129px;">Binaries</div>
<div id="L26" class="a nw" style="left:67.00px;top:174px;letter-spacing:0.129px;">Includes</div>
<div id="L27" class="a nw" style="left:67.00px;top:191px;letter-spacing:0.000px;">Release</div>
<div id="L28" class="a nw" style="left:67.00px;top:208px;letter-spacing:0.180px;">main.c</div>
<div id="L29" class="a nw" style="left:1304.00px;top:140px;letter-spacing:0.643px;">avr/io.h</div>
<div id="L30" class="a nw" style="left:1303.00px;top:157px;letter-spacing:0.120px;">main(void) : int</div>
<!-- /LABELS -->
</body></html>
